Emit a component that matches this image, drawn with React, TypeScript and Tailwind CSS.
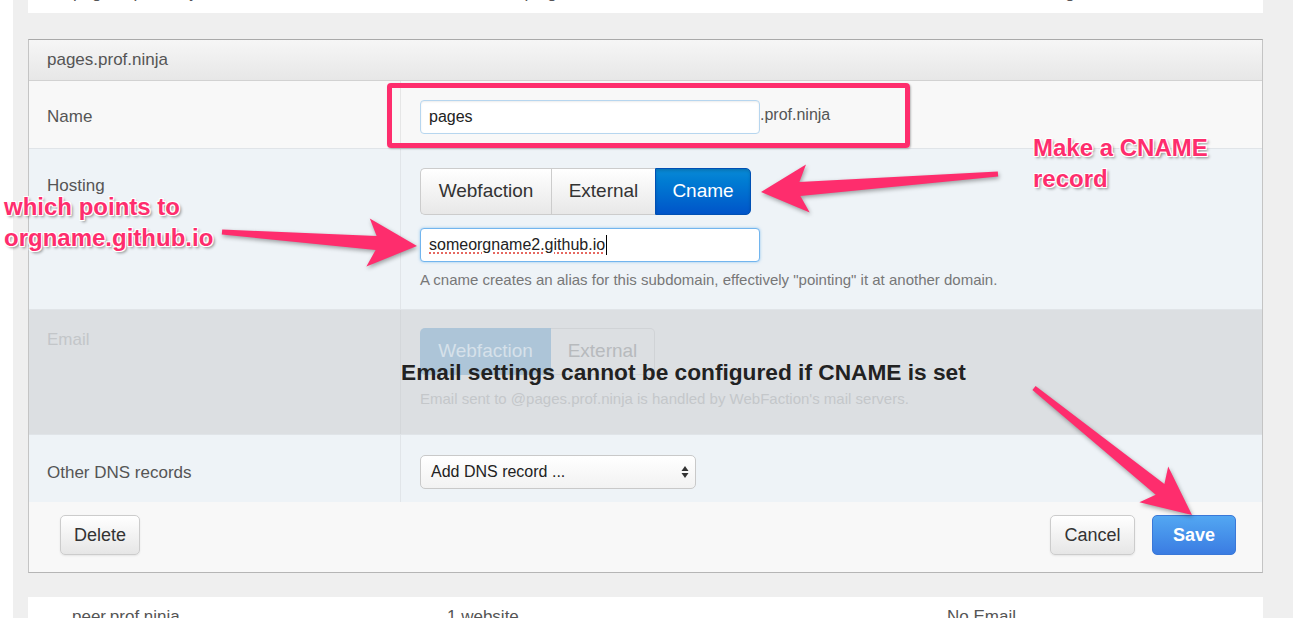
import React from "react";

const PINK = "#fe2d6d";

function arrowPts(
  tx: number,
  ty: number,
  hx: number,
  hy: number,
  o: { tailW?: number; neckW?: number; headLen?: number; headW?: number; notch?: number } = {}
) {
  const tailW = o.tailW ?? 5;
  const neckW = o.neckW ?? 14;
  const headLen = o.headLen ?? 47;
  const headW = o.headW ?? 48;
  const notch = o.notch ?? 8;
  const L = Math.hypot(hx - tx, hy - ty);
  const dx = (hx - tx) / L;
  const dy = (hy - ty) / L;
  const nx = -dy;
  const ny = dx;
  const p = (x: number, y: number) => `${x.toFixed(1)},${y.toFixed(1)}`;
  const nb = headLen - notch;
  return [
    p(tx + (nx * tailW) / 2, ty + (ny * tailW) / 2),
    p(hx - dx * nb + (nx * neckW) / 2, hy - dy * nb + (ny * neckW) / 2),
    p(hx - dx * headLen + (nx * headW) / 2, hy - dy * headLen + (ny * headW) / 2),
    p(hx, hy),
    p(hx - dx * headLen - (nx * headW) / 2, hy - dy * headLen - (ny * headW) / 2),
    p(hx - dx * nb - (nx * neckW) / 2, hy - dy * nb - (ny * neckW) / 2),
    p(tx - (nx * tailW) / 2, ty - (ny * tailW) / 2),
  ].join(" ");
}

const annot =
  "[text-shadow:0_0_2px_#fff,1px_1px_0_#fff,-1px_-1px_0_#fff,1px_-1px_0_#fff,-1px_1px_0_#fff,2px_2px_3px_rgba(0,0,0,0.45)]";

function GroupBtn({
  children,
  w,
  first,
  last,
  active,
}: {
  children: React.ReactNode;
  w: string;
  first?: boolean;
  last?: boolean;
  active?: boolean;
}) {
  const base = `${w} h-full flex items-center justify-center text-[19px] border-y border-l`;
  const round = `${first ? "rounded-l-[5px]" : ""} ${last ? "rounded-r-[5px] border-r" : ""}`;
  const look = active
    ? "bg-gradient-to-b from-[#0a8ad6] to-[#0054c9] border-[#0050b4] text-white shadow-[inset_0_2px_3px_rgba(0,0,0,0.15)]"
    : "bg-gradient-to-b from-[#ffffff] to-[#e8e8e8] border-[#cccccc] text-[#333]";
  return <div className={`${base} ${round} ${look}`}>{children}</div>;
}

function Row({
  label,
  labelPt,
  contentPt,
  h,
  bg,
  labelColor = "text-[#555]",
  divider = "border-[#e1e5e9]",
  children,
  top = true,
}: {
  label: string;
  labelPt: string;
  contentPt: string;
  h: string;
  bg: string;
  labelColor?: string;
  divider?: string;
  children: React.ReactNode;
  top?: boolean;
}) {
  return (
    <div className={`flex shrink-0 ${h} ${bg} ${top ? "border-t border-[#e0e4e8]" : ""}`}>
      <div className={`w-[372px] shrink-0 border-r ${divider} pl-[18px] ${labelPt} text-[17px] leading-[24px] ${labelColor}`}>
        {label}
      </div>
      <div className={`flex-1 pl-[19px] ${contentPt}`}>{children}</div>
    </div>
  );
}

export default function App() {
  return (
    <div className="relative w-[1293px] h-[618px] overflow-hidden bg-white flex font-['Liberation_Sans',Arial,sans-serif]">
      <div className="w-[13px] shrink-0 bg-white" />
      <div className="w-[15px] shrink-0 bg-[#efefef]" />
      <div className="w-[1235px] h-[618px] shrink-0 flex flex-col bg-[#efefef] overflow-hidden">
        {/* top clipped row */}
        <div className="h-[13px] shrink-0 bg-white overflow-hidden">
          <div className="flex -mt-[19px] text-[17px] leading-[24px] text-[#555]">
            <div className="w-[420px] pl-[45px]">pages2.prof.ninja</div>
            <div className="w-[500px]">1 website plugin</div>
            <div>Email forwarding</div>
          </div>
        </div>
        <div className="h-[26px] shrink-0" />
        {/* panel */}
        <div className="h-[534px] shrink-0 flex flex-col border border-[#c4c4c4] border-t-[#a9a9a9] border-b-[#b5b5b5] bg-white">
          <div className="h-[41px] shrink-0 bg-gradient-to-b from-[#f6f6f6] to-[#e7e7e7] border-b border-[#d2d2d2] pl-[18px] flex items-center text-[17px] text-[#555]">
            pages.prof.ninja
          </div>

          <Row label="Name" labelPt="pt-[24px]" contentPt="pt-[19px]" h="h-[67px]" bg="bg-[#f8f8f8]" top={false} divider="border-[#e6e6e6]">
            <div className="flex items-center">
              <div className="w-[340px] h-[34px] bg-white border border-[#b7d6ef] rounded-[4px] shadow-[inset_0_1px_2px_rgba(0,0,0,0.08)] flex items-center pl-[8px] text-[16px] text-[#222]">
                pages
              </div>
              <span className="text-[16px] text-[#555] -mt-[4px]">.prof.ninja</span>
            </div>
          </Row>

          <Row label="Hosting" labelPt="pt-[25px]" contentPt="pt-[19px]" h="h-[161px]" bg="bg-[#eef3f7]">
            <div className="flex h-[47px]">
              <GroupBtn w="w-[131px]" first>
                Webfaction
              </GroupBtn>
              <GroupBtn w="w-[104px]">External</GroupBtn>
              <GroupBtn w="w-[96px]" last active>
                Cname
              </GroupBtn>
            </div>
            <div className="mt-[13px] w-[340px] h-[34px] bg-white border border-[#72b5ee] rounded-[4px] shadow-[0_0_3px_rgba(82,168,236,0.6)] flex items-center pl-[8px] text-[16px] text-[#222]">
              <span className="underline decoration-dotted decoration-[#e0443b] underline-offset-[3px]">someorgname2.github.io</span>
              <span className="w-[1px] h-[20px] bg-black ml-[1px]" />
            </div>
            <div className="mt-[8px] text-[15px] leading-[20px] text-[#777]">
              A cname creates an alias for this subdomain, effectively "pointing" it at another domain.
            </div>
          </Row>

          <Row
            label="Email"
            labelPt="pt-[18px]"
            contentPt="pt-[18px]"
            h="h-[125px]"
            bg="bg-[#dcdfe2]"
            labelColor="text-[#c3c6c9]"
            divider="border-[#d4d7da]"
          >
            <div className="flex h-[47px]">
              <div className="w-[131px] h-full rounded-l-[5px] bg-[#adc5d8] flex items-center justify-center text-[19px] text-[#d6e1ea]">
                Webfaction
              </div>
              <div className="w-[104px] h-full rounded-r-[5px] border border-l-0 border-[#d0d3d6] flex items-center justify-center text-[19px] text-[#b7babd]">
                External
              </div>
            </div>
            <div className="mt-[14px] text-[15px] leading-[20px] text-[#c4c7ca]">
              Email sent to @pages.prof.ninja is handled by WebFaction's mail servers.
            </div>
          </Row>

          <Row label="Other DNS records" labelPt="pt-[26px]" contentPt="pt-[20px]" h="h-[68px]" bg="bg-[#eef3f7]">
            <div className="w-[276px] h-[34px] rounded-[5px] border border-[#c9c9c9] bg-gradient-to-b from-[#ffffff] to-[#f2f2f2] flex items-center justify-between pl-[10px] pr-[6px] text-[16px] text-[#222]">
              <span>Add DNS record ...</span>
              <svg width="8" height="16" viewBox="0 0 8 16">
                <path d="M4 2 L7.5 7 L0.5 7 Z" fill="#333" />
                <path d="M4 14 L7.5 9 L0.5 9 Z" fill="#333" />
              </svg>
            </div>
          </Row>

          <div className="flex-1 bg-[#f8f8f8] flex items-start justify-between pl-[31px] pr-[26px] pt-[13px]">
            <div className="w-[80px] h-[40px] rounded-[5px] border border-[#cccccc] bg-gradient-to-b from-[#ffffff] to-[#e6e6e6] shadow-[0_1px_2px_rgba(0,0,0,0.08)] flex items-center justify-center text-[18px] text-[#333]">
              Delete
            </div>
            <div className="flex gap-[17px]">
              <div className="w-[85px] h-[40px] rounded-[5px] border border-[#cccccc] bg-gradient-to-b from-[#ffffff] to-[#e6e6e6] shadow-[0_1px_2px_rgba(0,0,0,0.08)] flex items-center justify-center text-[18px] text-[#333]">
                Cancel
              </div>
              <div className="w-[84px] h-[40px] rounded-[5px] border border-[#3a78d8] bg-gradient-to-b from-[#53a7f2] to-[#3b7ce2] flex items-center justify-center text-[18px] font-bold text-white">
                Save
              </div>
            </div>
          </div>
        </div>
        <div className="h-[24px] shrink-0" />
        {/* bottom row */}
        <div className="h-[40px] shrink-0 bg-white flex pt-[8px] text-[17px] leading-[24px] text-[#555]">
          <div className="w-[419px] pl-[44px]">peer.prof.ninja</div>
          <div className="w-[500px]">1 website</div>
          <div>No Email</div>
        </div>
      </div>
      <div className="flex-1 bg-[#efefef]" />

      {/* Overlays */}
      <div className="absolute left-[401px] top-[359px] text-[22.7px] leading-[26px] font-bold text-[#222] whitespace-nowrap">
        Email settings cannot be configured if CNAME is set
      </div>

      <div className="absolute left-[387px] top-[83px] w-[523px] h-[65px] border-[5px] border-[#fe2d6d] rounded-[4px] shadow-[1px_1px_2px_rgba(0,0,0,0.25)]" />

      <div className={`absolute left-[1033px] top-[132px] text-[24px] leading-[31px] font-bold text-[#fe2d6d] ${annot}`}>
        Make a CNAME
        <br />
        record
      </div>
      <div className={`absolute left-[4px] top-[191px] text-[24px] leading-[31px] font-bold text-[#fe2d6d] ${annot} whitespace-nowrap`}>
        which points to
        <br />
        orgname.github.io
      </div>

      <svg
        className="absolute left-0 top-0 pointer-events-none"
        width="1293"
        height="618"
        style={{ filter: "drop-shadow(1px 2px 2px rgba(0,0,0,0.35))" }}
      >
        <polygon points={arrowPts(998, 174, 761, 192, { headLen: 47, headW: 48 })} fill={PINK} />
        <polygon points={arrowPts(222, 232, 417, 246, { headLen: 49, headW: 48 })} fill={PINK} />
        <polygon points={arrowPts(1034, 388, 1192, 515, { headLen: 49, headW: 46 })} fill={PINK} />
      </svg>
    </div>
  );
}
